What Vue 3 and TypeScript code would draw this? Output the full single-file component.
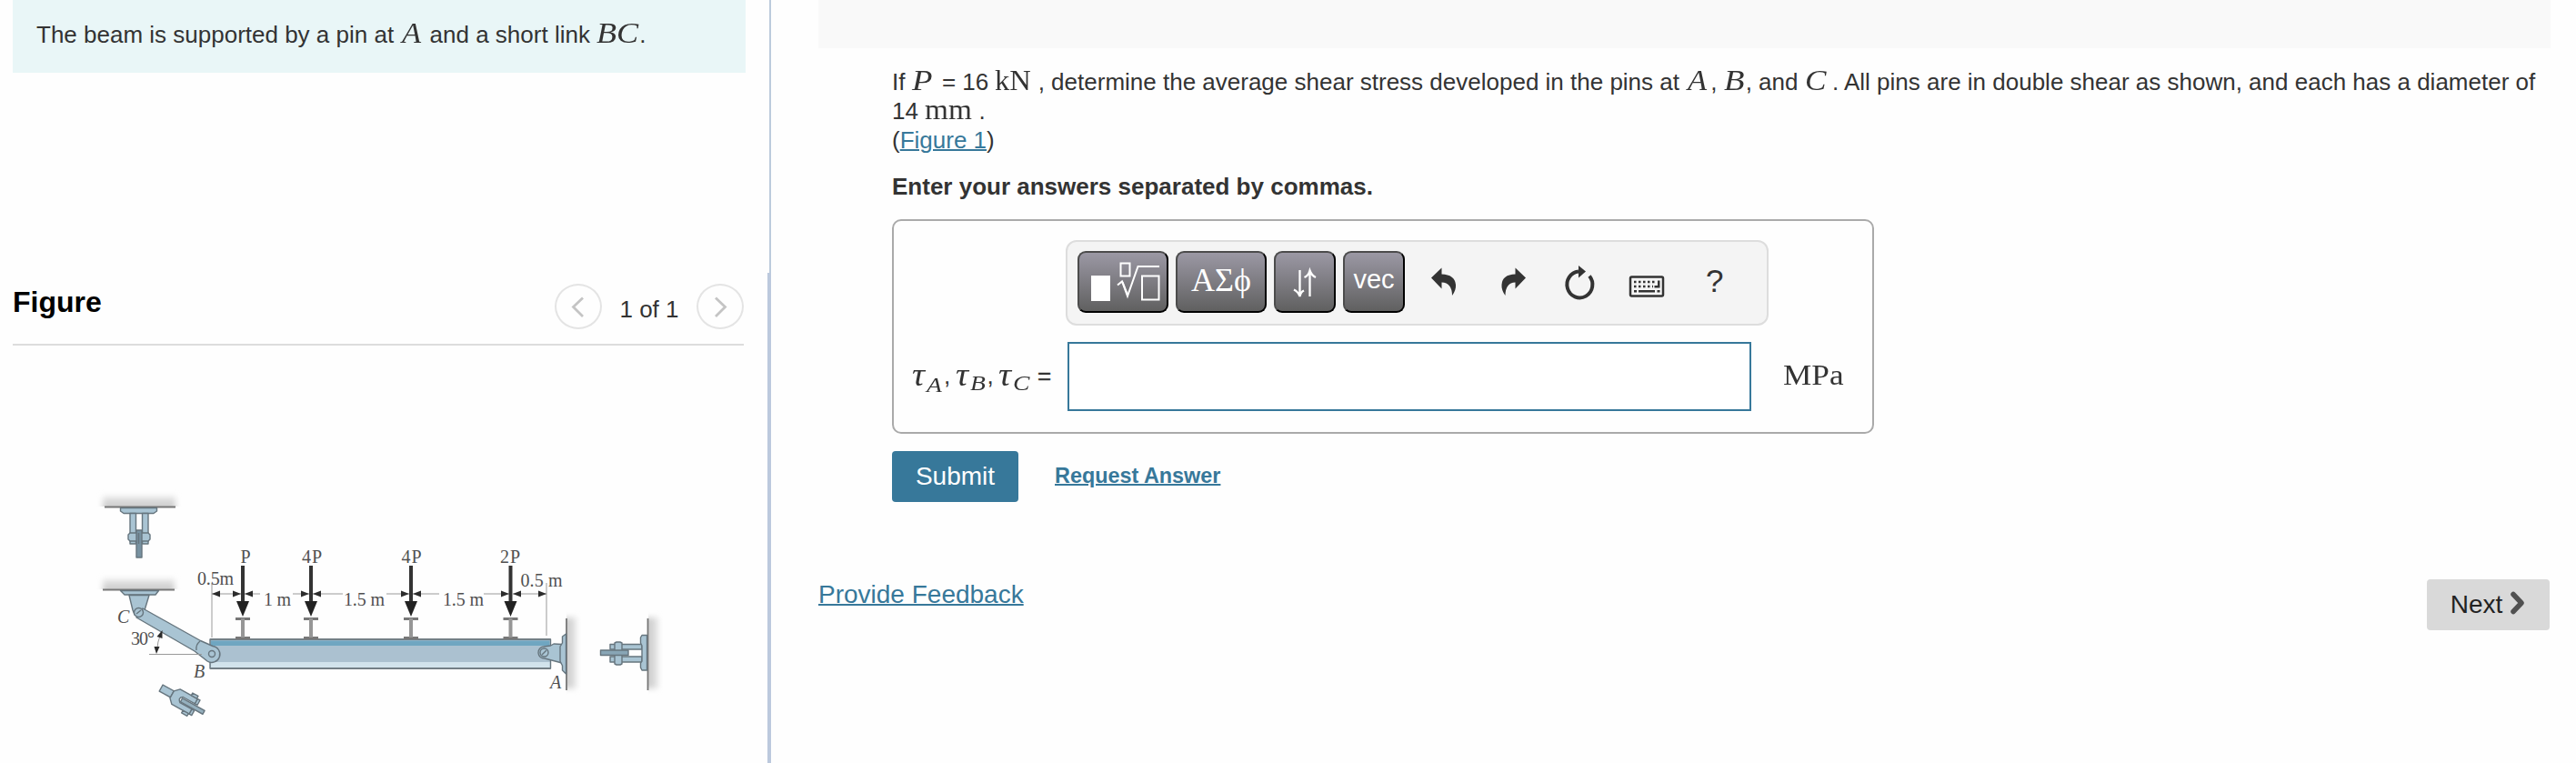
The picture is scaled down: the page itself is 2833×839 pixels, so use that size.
<script setup lang="ts">
const loads = [
  { x: 267, label: 'P', lx: 264.5 },
  { x: 342, label: '4P', lx: 332 },
  { x: 452, label: '4P', lx: 441.5 },
  { x: 561.5, label: '2P', lx: 550 },
]
const dims = [
  { from: 233, to: 265 },
  { from: 564, to: 601 },
]
const split = [
  { from: 269, a: 286, b: 322, to: 340 },
  { from: 344, a: 377, b: 425, to: 450 },
  { from: 454, a: 483, b: 532, to: 560 },
]
const dimLabels = [
  { x: 217, y: 643, w: 40, t: '0.5m' },
  { x: 290, y: 666, w: 30, t: '1 m' },
  { x: 378, y: 666, w: 45, t: '1.5 m' },
  { x: 487, y: 666, w: 45, t: '1.5 m' },
  { x: 572.5, y: 645, w: 46, t: '0.5 m' },
]
const right = (x: number) => `M${x} 653l-9 -3.5v7z`
const left = (x: number) => `M${x} 653l9 -3.5v7z`
</script>

<template>
  <div class="page">
    <aside class="side">
      <div class="intro">The beam is supported by a pin at <i class="m mA">A</i> and a short link <i class="m mBC">BC</i>.</div>
      <header class="fig-head">
        <h2>Figure</h2>
        <nav class="pager">
          <button class="circle"><svg width="52" height="50"><path d="M31 15.500L20.500 25.500L31 36" /></svg></button>
          <span class="count">1 of 1</span>
          <button class="circle"><svg width="52" height="50"><path d="M21 15.500L31.500 25.500L21 36" /></svg></button>
        </nav>
      </header>
      <svg class="figure" viewBox="0 380 844 459" width="844" height="459">
        <defs>
          <filter id="soft" x="-30%" y="-60%" width="160%" height="220%"><feGaussianBlur stdDeviation="3" /></filter>
          <linearGradient id="up" x1="0" y1="0" x2="0" y2="1"><stop offset="0" stop-color="#e6e6e6" /><stop offset="1" stop-color="#c0c0c0" /></linearGradient>
          <linearGradient id="side" x1="0" y1="0" x2="1" y2="0"><stop offset="0" stop-color="#c0c0c0" /><stop offset="1" stop-color="#e6e6e6" /></linearGradient>
          <clipPath id="c1"><rect x="100" y="530" width="110" height="27" /></clipPath>
          <clipPath id="c2"><rect x="100" y="620" width="110" height="28" /></clipPath>
          <clipPath id="c3"><rect x="623" y="660" width="30" height="120" /></clipPath>
          <clipPath id="c4"><rect x="713" y="660" width="30" height="120" /></clipPath>
        </defs>

        <g clip-path="url(#c1)"><rect x="113" y="546" width="80" height="16" fill="url(#up)" filter="url(#soft)" /></g>
        <g clip-path="url(#c2)"><rect x="113" y="637" width="79" height="16" fill="url(#up)" filter="url(#soft)" /></g>
        <g clip-path="url(#c3)"><rect x="618" y="679" width="16" height="78" fill="url(#side)" filter="url(#soft)" /></g>
        <g clip-path="url(#c4)"><rect x="708" y="679" width="16" height="78" fill="url(#side)" filter="url(#soft)" /></g>
        <path class="wall" d="M115 557.500H193M113 648.500H192M623 680V759M712.500 680V759" />

        <g class="steel">
          <path d="M132.500 558.500H172.500V562L169 564.500H136L132.500 562Z" />
          <path d="M143 564.500H149.500V598H143ZM156.500 564.500H163V598H156.500Z" />
          <path d="M143 586H163L165 588V593L163 595H143L141 593V588Z" />
          <path d="M150 583H156V613H150Z" fill="#7892a1" />
          <path d="M152.500 586V598" />
        </g>

        <g class="steel">
          <path d="M132.500 649.500H174.500L171 654H137Z" />
          <path d="M142 654.500H164L159 671L158 676H148L146 671Z" />
        </g>

        <g class="steel">
          <rect x="231" y="703" width="374.500" height="32" fill="#abc1d0" />
          <rect x="232" y="704.500" width="372.500" height="5.500" fill="#6fa6c1" stroke="none" />
          <rect x="232" y="728" width="372.500" height="6" fill="#d1e3ec" stroke="none" />
          <path d="M157 669L220.500 704.500L234 710.500A9 9 0 1 1 228 727L214 716L150 679Z" />
          <path d="M220 705Q215 709 216 715" />
          <circle cx="152.500" cy="673.500" r="5" /><path d="M150 675L155 671" />
          <circle cx="233" cy="719" r="3.500" />
          <path d="M605.500 710L609 708L618 708.500V729L599 724A6.500 6.500 0 1 1 598 711Z" />
          <path d="M622.500 697L618.500 700V707L616 711V727L618.500 732V737L622.500 741Z" />
          <circle cx="598.500" cy="717.500" r="4.500" /><path d="M596 720L601 715" />
        </g>
        <path class="edge" d="M231 703H605.500M231 735H605.500" />

        <g class="steel">
          <path d="M671 708.500H706V714H671ZM671 722H706V728H671Z" />
          <path d="M676 707L678 706H682L684 707V730L682 731H678L676 730Z" />
          <path d="M660.500 715H691V720.500H660.500Z" fill="#88a5b5" />
          <path d="M711.500 698.500H706L704.500 701V707L706 710V727L704.500 729V734L706 737H711.500Z" />
        </g>

        <g class="steel" transform="translate(178 757) rotate(29)">
          <path d="M-1 -4H13V4H-1Z" />
          <path d="M13 -4L18 -9H40V-3H25Q20 0 25 4H40V10H18L13 5Z" />
          <path d="M32 -12H39V-9H32ZM32 10H39V13H32ZM40 -9H43V-3H40ZM40 4H43V10H40Z" />
          <path d="M25 -1.500H53V3H25Z" fill="#95b0be" />
        </g>

        <g class="thin">
          <path d="M233 641V701M601 641V699M164 719.500H222" />
          <path v-for="d in dims" :key="d.from" :d="`M${d.from} 653H${d.to}`" />
          <path v-for="s in split" :key="s.from" :d="`M${s.from} 653H${s.a}M${s.b} 653H${s.to}`" />
          <path d="M177 696Q173 706 172.500 716" />
        </g>
        <g class="ink">
          <path v-for="d in dims" :key="d.from" :d="left(d.from) + right(d.to)" />
          <path v-for="s in split" :key="s.from" :d="left(s.from) + right(s.to)" />
          <path d="M178.500 693L172.500 700L178.500 702ZM172 719L169.500 711L175.500 711Z" />
        </g>
        <g v-for="l in loads" :key="l.x">
          <path class="ibeam" :d="`M${l.x - 8} 680.500H${l.x + 8}M${l.x - 8} 701.500H${l.x + 8}`" />
          <path class="web" :d="`M${l.x} 680V701`" />
          <path class="shaft" :d="`M${l.x} 622V664`" />
          <path class="head" :d="`M${l.x - 7} 661H${l.x + 7}L${l.x} 678Z`" />
          <text class="lab" :x="l.lx" y="619" :textLength="l.label.length > 1 ? 22 : 11">{{ l.label }}</text>
        </g>
        <text v-for="d in dimLabels" :key="d.x" class="lab" :x="d.x" :y="d.y" :textLength="d.w">{{ d.t }}</text>
        <text class="lab" x="144" y="709" textLength="26">30°</text>
        <text class="lab it" x="129" y="685">C</text>
        <text class="lab it" x="213" y="745">B</text>
        <text class="lab it" x="605" y="757">A</text>
      </svg>
    </aside>

    <div class="divider"><div class="d-top"></div><div class="d-bottom"></div></div>

    <main class="main">
      <div class="band"></div>
      <section class="question">
        <p>If <i class="m mP">P</i> = 16 <span class="m mkN">kN</span> , determine the average shear stress developed in the pins at <i class="m mA2">A</i>, <i class="m mB2">B</i>, and <i class="m mC2">C</i> . All pins are in double shear as shown, and each has a diameter of</p>
        <p>14 <span class="m mmm">mm</span> .</p>
        <p>(<a>Figure 1</a>)</p>
        <p class="strong">Enter your answers separated by commas.</p>

        <div class="answer">
          <div class="toolbar">
            <button class="key wide"><svg width="96" height="64">
              <rect x="13" y="25" width="21" height="28" fill="#fff" />
              <rect x="45.500" y="11.500" width="10" height="14" class="o" />
              <rect x="69" y="25.500" width="18.500" height="26" class="o" />
              <path class="o" d="M42 35.500L47 31.500L53 47.500L64.500 15H88" />
              <path class="o" d="M47.500 32L53 46" stroke-width="3" />
            </svg></button>
            <button class="key wide greek">ΑΣϕ</button>
            <button class="key"><svg width="64" height="64"><path class="o w" d="M26.500 19V47M20 40.500Q25 43 26.500 48Q27.500 43 31 41.500M37.500 48V20M31.500 27Q36 25 37.500 19.500Q39.500 25 44 27" /></svg></button>
            <button class="key vec">vec</button>
            <span class="icons">
              <svg viewBox="1560 280 350 70" width="350" height="70">
                <path d="M1574 305.500L1585.500 294.500V301.500Q1600 302 1601 313Q1601.500 319 1597 325Q1597 311 1585.500 310.500V317.500Z" />
                <path d="M1678 305.500L1666.500 294.500V301.500Q1652 302 1651.500 313Q1651 319 1655.500 325Q1655.500 311 1666.500 310.500V317.500Z" />
                <path d="M1736 298.500A14 14.500 0 1 0 1748 303.500" fill="none" stroke="#333" stroke-width="4" />
                <path d="M1736 292L1744 298.500L1736 305.500Z" />
                <rect x="1793" y="304.500" width="36" height="21" rx="1.500" fill="none" stroke="#333" stroke-width="2.500" />
                <path d="M1797 310H1821M1797 315H1818" fill="none" stroke="#333" stroke-width="2.500" stroke-dasharray="2.500 2.500" />
                <path d="M1823 308.500H1825.500V316.500H1819.500V314H1823ZM1797 319H1800V321.500H1797ZM1802 319H1820V321.500H1802ZM1822.500 319H1825.500V321.500H1822.500Z" />
              </svg>
              <span class="help">?</span>
            </span>
          </div>
          <div class="entry">
            <div class="tau"><i>τ</i><sub>A</sub><b>,</b><i>τ</i><sub class="up">B</sub><b>,</b><i>τ</i><sub class="up">C</sub><span>=</span></div>
            <div class="field"></div>
            <span class="unit">MPa</span>
          </div>
        </div>

        <div class="actions">
          <button class="submit">Submit</button>
          <a class="request">Request Answer</a>
        </div>
      </section>
      <footer class="foot">
        <a class="feedback">Provide Feedback</a>
        <button class="next">Next<svg width="18" height="26"><path d="M4 3.500L13 13L4 22.500" /></svg></button>
      </footer>
    </main>
  </div>
</template>

<style>
body { margin: 0; background: #fff; overflow: hidden; }
</style>

<style scoped>
* { box-sizing: border-box; }
.page { display: flex; width: 2833px; height: 839px; overflow: hidden; background: #fefefe; font-family: "Liberation Sans", Arial, sans-serif; font-size: 26px; color: #333; }
button { font-family: inherit; padding: 0; margin: 0; }
.side { width: 844px; height: 839px; flex: none; display: flex; flex-direction: column; }
.intro { margin-left: 14px; width: 806px; height: 80px; padding: 22px 0 0 26px; line-height: 32px; background: #e9f6f7; white-space: nowrap; }
.m { font-family: "Liberation Serif", serif; font-size: 32px; line-height: 27px; display: inline-block; height: 27px; transform: scaleX(1.08); transform-origin: left; }
.mA { width: 23px; margin-left: 2px; }
.mBC { width: 47px; transform: scaleX(1.13); }
.mP { width: 26px; transform: scaleX(1.15); }
.mkN { width: 40px; transform: scaleX(1.02); }
.mA2 { width: 25px; margin-left: 2px; }
.mB2 { width: 24px; transform: scaleX(1.15); }
.mC2 { width: 23px; transform: scaleX(1.1); }
.mmm { width: 52px; transform: scaleX(1.04); }
.fig-head { margin: 222px 0 0 14px; width: 804px; height: 78px; border-bottom: 2px solid #ddd; display: flex; justify-content: space-between; }
h2 { margin: 10px 0 0; font-size: 32px; line-height: 40px; color: #000; height: 40px; }
.pager { display: flex; margin-top: 10px; }
.circle { width: 52px; height: 50px; border: 2px solid #e4e4e4; border-radius: 50%; background: transparent; display: flex; justify-content: center; align-items: center; }
.circle svg { flex: none; }
.circle path { fill: none; stroke: #c4c4c4; stroke-width: 2.800; }
.count { width: 104px; text-align: center; line-height: 30px; padding-top: 13px; }
.figure { flex: none; display: block; }
.divider { width: 4px; height: 839px; flex: none; display: flex; flex-direction: column; align-items: flex-end; }
.d-top { width: 2px; height: 300px; background: #bccbdc; }
.d-bottom { width: 4px; flex: 1; background: #bcc9dd; }
.main { width: 1985px; }
.band { height: 53px; margin: 0 28px 0 52px; background: #f9f9f9; }
.question { margin-left: 133px; padding-top: 21px; }
p { margin: 0; height: 32px; line-height: 32px; white-space: nowrap; }
.strong { margin-top: 19px; font-weight: bold; }
a { color: #37789a; text-decoration: underline; text-decoration-thickness: 2px; }
.answer { margin-top: 20px; width: 1080px; height: 236px; border: 2px solid #aaa; border-radius: 10px; padding: 21px 0 0 0; }
.toolbar { margin-left: 189px; width: 773px; height: 94px; border: 2px solid #ddd; border-radius: 12px; background: #f4f4f4; padding: 10px 0 0 11px; display: flex; gap: 8px; }
.key { flex: none; width: 68px; height: 68px; border: 2px solid; border-color: #4c4c4c #000 #000 #4c4c4c; border-radius: 9px; background: linear-gradient(#9b98a4, #606060); color: #fff; display: flex; align-items: center; justify-content: center; }
.wide { width: 100px; }
.key svg { flex: none; }
.o { fill: none; stroke: #fff; stroke-width: 2; }
.w { stroke-width: 2.300; }
.greek { font-family: "Liberation Serif", serif; font-size: 36px; padding-bottom: 4px; }
.vec { font-size: 29px; padding-bottom: 5px; }
.icons { display: flex; width: 390px; margin-left: 7px; margin-top: 4px; }
.icons svg { flex: none; fill: #333; }
.help { font-size: 35px; line-height: 40px; margin: 9px 0 0 -34px; }
.entry { display: flex; height: 76px; margin-top: 18px; }
.tau { width: 191px; padding: 21px 0 0 20px; display: flex; font-family: "Liberation Serif", serif; font-size: 35px; line-height: 32px; flex: none; }
.tau i { width: 16px; transform: scaleX(1.12); transform-origin: left; }
.tau sub { width: 19px; font-size: 24px; font-style: italic; line-height: 32px; margin-top: 10px; transform: scaleX(1.15); transform-origin: left; }
.tau sub.up { margin-top: 8px; }
.tau b { width: 12.500px; font-weight: normal; font-family: "Liberation Sans", sans-serif; font-size: 26px; }
.tau span { font-family: "Liberation Sans", sans-serif; font-size: 26px; font-weight: normal; -webkit-text-stroke: 0.400px #333; margin-left: 8px; }
.field { flex: none; width: 752px; height: 76px; border: 2px solid #37789a; background: #fff; }
.unit { margin: 18px 0 0 35px; font-family: "Liberation Serif", serif; font-size: 32px; line-height: 36px; transform: scaleX(1.1); transform-origin: left; height: 36px; }
.actions { margin-top: 19px; height: 56px; display: flex; }
.submit { width: 139px; height: 56px; border: 0; border-radius: 4px; background: #37789a; color: #fff; font-size: 28px; }
.request { margin: 13px 0 0 40px; font-weight: bold; font-size: 23.400px; line-height: 28px; }
.foot { margin: 85px 29px 0 52px; display: flex; justify-content: space-between; }
.feedback { font-size: 28px; line-height: 34px; }
.next { width: 135px; height: 56px; border: 0; border-radius: 4px; background: #d9d9d9; color: #222; font-size: 28px; display: flex; align-items: center; justify-content: center; gap: 8px; }
.next svg { margin-bottom: 4px; }
.next path { fill: none; stroke: #505050; stroke-width: 5.500; stroke-linecap: round; stroke-linejoin: round; }
.steel { fill: #a9c4d3; stroke: #66757e; stroke-width: 1.400; stroke-linejoin: round; }
.edge { stroke: #737f86; stroke-width: 2; }
.wall { stroke: #777; stroke-width: 1.800; }
.thin { fill: none; stroke: #9a9a9a; stroke-width: 1; }
.ink { fill: #2c2c2c; }
.ibeam { stroke: #777; stroke-width: 3; }
.web { stroke: #969696; stroke-width: 4; }
.shaft { stroke: #333; stroke-width: 4; }
.head { fill: #222; }
.lab { font-family: "Liberation Serif", serif; font-size: 20px; fill: #505050; }
.it { font-style: italic; }
</style>
